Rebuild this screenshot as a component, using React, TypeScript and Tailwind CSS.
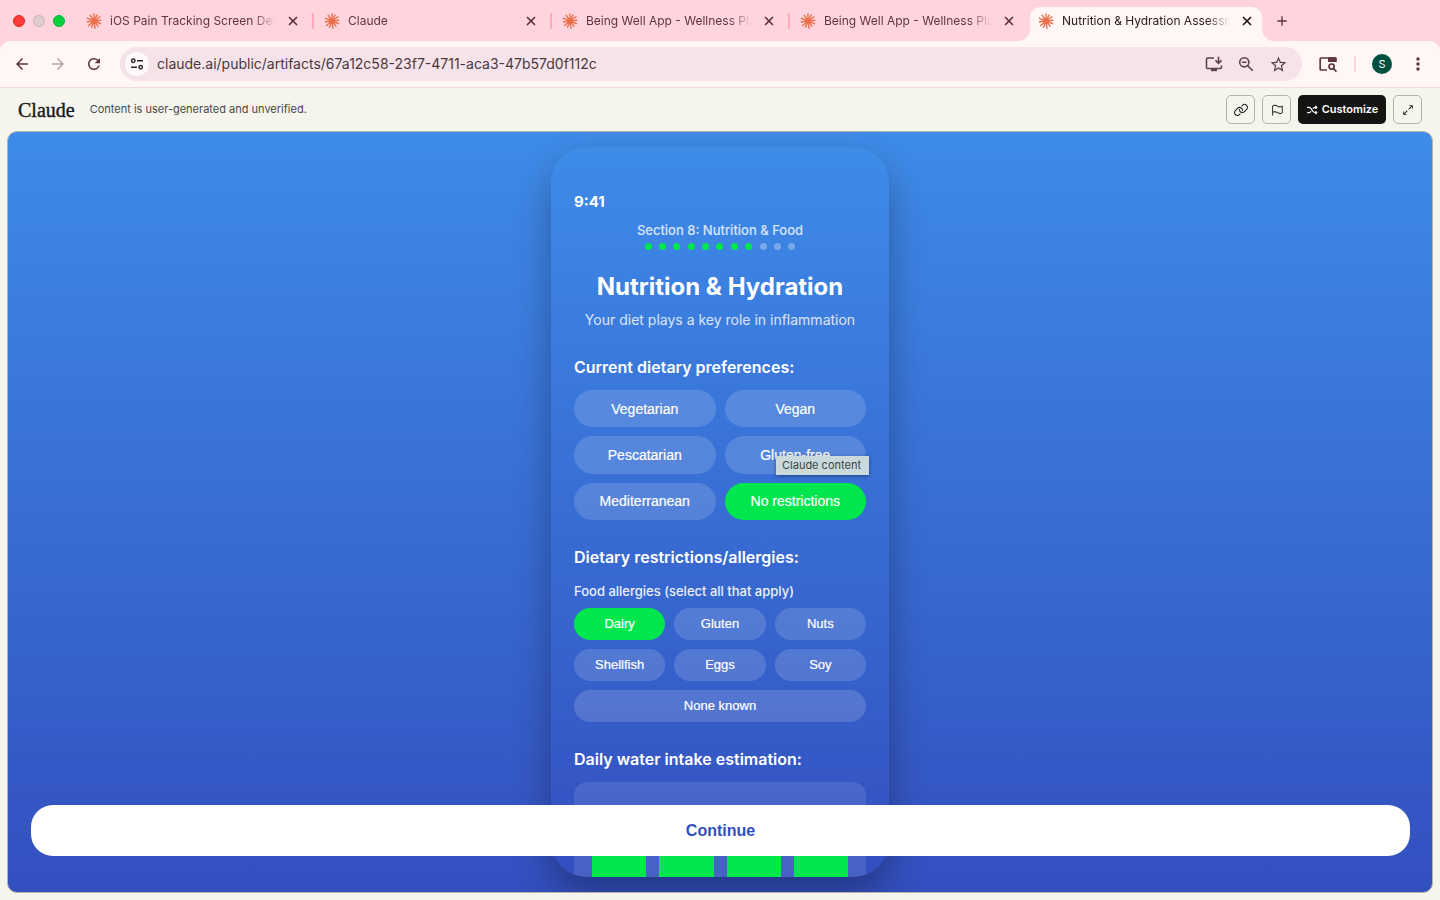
import { ReactNode } from "react";
import { X } from "lucide-react";
import { PiArrowsOutSimple, PiFlag, PiLink, PiShuffleBold } from "react-icons/pi";
import {
  MdAdd,
  MdArrowBack,
  MdArrowForward,
  MdMoreVert,
  MdRefresh,
  MdStarBorder,
} from "react-icons/md";

const tabs = [
  { id: 1, title: "iOS Pain Tracking Screen Design" },
  { id: 2, title: "Claude" },
  { id: 3, title: "Being Well App - Wellness Platform" },
  { id: 4, title: "Being Well App - Wellness Platform" },
  { id: 5, title: "Nutrition & Hydration Assessment" },
];
const activeTab = 5;

const preferences = ["Vegetarian", "Vegan", "Pescatarian", "Gluten-free", "Mediterranean", "No restrictions"];
const allergies = ["Dairy", "Gluten", "Nuts", "Shellfish", "Eggs", "Soy", "None known"];

const rays = [
  [0, 7.6], [27, 7.2], [55, 7.8], [84, 7.2], [112, 7.6], [142, 7.2],
  [172, 7.8], [202, 7.2], [230, 7.8], [262, 7.2], [292, 7.8], [326, 7.4],
];

function Burst() {
  return (
    <svg viewBox="-8 -8 16 16" className="size-4 shrink-0" aria-hidden="true">
      <g stroke="#ea6f4a" strokeWidth="1.4" strokeLinecap="butt">
        {rays.map(([angle, length]) => (
          <line key={angle} x1="0" y1="0" x2="0" y2={-length} transform={`rotate(${angle})`} />
        ))}
      </g>
      <circle r="3" fill="#ea6f4a" />
    </svg>
  );
}

function TabCurve({ flip }: { flip?: boolean }) {
  return (
    <svg
      viewBox="0 0 12 12"
      className={flip ? "absolute bottom-0 left-full size-3 -scale-x-100" : "absolute bottom-0 right-full size-3"}
      aria-hidden="true"
    >
      <path d="M12 0A12 12 0 0 1 0 12H12Z" fill="#fff6f5" />
    </svg>
  );
}

function Tab({ title, active, divider }: { title: string; active: boolean; divider: boolean }) {
  return (
    <div className="relative flex min-w-0 max-w-[238px] flex-1 items-end">
      <div
        className={
          active
            ? "relative ml-0.5 mr-1 flex h-[34px] min-w-0 flex-1 items-center rounded-t-[10px] bg-[#fff6f5] px-2 pb-1.5 text-[#2a1a1e]"
            : "flex h-[34px] min-w-0 flex-1 items-center pb-1.5 pl-2.5 pr-3 text-[#5f3540]"
        }
      >
        {active && <TabCurve />}
        {active && <TabCurve flip />}
        <Burst />
        <span className="ml-2 min-w-0 flex-1 overflow-hidden whitespace-nowrap text-xs leading-4 [mask-image:linear-gradient(to_right,black_86%,transparent)]">
          {title}
        </span>
        <button type="button" aria-label="Close tab" className="ml-2.5 shrink-0">
          <X className="size-3.5" strokeWidth={3} />
        </button>
      </div>
      {divider && <span className="mb-3 h-4 w-0.5 shrink-0 bg-[#ffabbd]" />}
    </div>
  );
}

function ToolbarButton({ label, children }: { label: string; children: ReactNode }) {
  return (
    <button type="button" aria-label={label} className="flex size-5 shrink-0 items-center justify-center">
      {children}
    </button>
  );
}

function Browser() {
  return (
    <header>
      <div className="flex h-[41px] bg-[#ffd4dc]">
        <div className="flex w-[76px] shrink-0 items-center gap-2 pl-[13px]">
          <span className="size-3 rounded-full border border-[#e5211f] bg-[#ff3b3b]" />
          <span className="size-3 rounded-full border border-[#c9b4ba] bg-[#e0ccd1]" />
          <span className="size-3 rounded-full border border-[#00b836] bg-[#00d13c]" />
        </div>
        <nav className="flex min-w-0 flex-1 items-stretch" aria-label="Tabs">
          {tabs.map((tab) => (
            <Tab key={tab.id} title={tab.title} active={tab.id === activeTab} divider={tab.id < activeTab - 1} />
          ))}
          <button type="button" aria-label="New tab" className="ml-2 shrink-0 self-center text-[#5f3540]">
            <MdAdd className="size-4" />
          </button>
        </nav>
      </div>
      <div className="bg-[#ffd4dc]">
        <div className="flex h-[47px] items-center rounded-t-[10px] border-b border-[#f3dbe1] bg-[#fff6f5] pl-3 pr-3 text-[#5f3540]">
          <div className="flex shrink-0 gap-4">
            <ToolbarButton label="Back"><MdArrowBack className="size-[18px]" /></ToolbarButton>
            <ToolbarButton label="Forward"><MdArrowForward className="size-[18px] text-[#b8a3a8]" /></ToolbarButton>
            <ToolbarButton label="Reload"><MdRefresh className="size-[18px]" /></ToolbarButton>
          </div>
          <div className="ml-4 flex h-[34px] min-w-0 flex-1 items-center rounded-full bg-[#f5e3e9] pl-[5px] pr-3.5">
            <button
              type="button"
              aria-label="Site information"
              className="flex size-6 shrink-0 items-center justify-center rounded-full bg-[#fff9f9] text-[#35252a]"
            >
              <svg viewBox="0 0 14 14" className="size-3.5" fill="none" stroke="currentColor" strokeWidth="1.5" aria-hidden="true">
                <circle cx="3.3" cy="3.8" r="1.7" />
                <path d="M7 3.8h6M1 10.2h6" />
                <circle cx="10.7" cy="10.2" r="1.7" />
              </svg>
            </button>
            <input
              aria-label="Address"
              readOnly
              value="claude.ai/public/artifacts/67a12c58-23f7-4711-aca3-47b57d0f112c"
              className="ml-2 min-w-0 flex-1 bg-transparent text-sm text-[#4b383e] outline-none"
            />
            <div className="flex gap-3 text-[#5b444b]">
              <ToolbarButton label="Install">
                <svg viewBox="0 0 18 18" className="size-[18px]" fill="none" stroke="currentColor" strokeWidth="1.6" aria-hidden="true">
                  <path d="M9 3H2.5a1 1 0 0 0-1 1v8.5a1 1 0 0 0 1 1h13a1 1 0 0 0 1-1V10.5" />
                  <path d="M13.5 1.8v6M10.5 5.4l3 3 3-3" />
                  <path d="M6 14h6v2.2H6Z" fill="currentColor" stroke="none" />
                </svg>
              </ToolbarButton>
              <ToolbarButton label="Zoom">
                <svg viewBox="0 0 18 18" className="size-[18px]" fill="none" stroke="currentColor" strokeWidth="1.6" aria-hidden="true">
                  <circle cx="7.3" cy="7.3" r="4.6" />
                  <path d="M5 7.3h4.6M10.6 10.6l5.1 5.1" />
                </svg>
              </ToolbarButton>
              <ToolbarButton label="Bookmark"><MdStarBorder className="size-[19px]" /></ToolbarButton>
            </div>
          </div>
          <div className="ml-4 flex shrink-0 items-center">
            <ToolbarButton label="Search side panel">
              <svg viewBox="0 0 20 18" className="h-[18px] w-5" fill="none" stroke="currentColor" strokeWidth="1.7" aria-hidden="true">
                <path d="M9 15H3.2a1 1 0 0 1-1-1V4a1 1 0 0 1 1-1H18" />
                <path d="M10 2.2h7.8a1 1 0 0 1 1 1V7H10Z" fill="currentColor" stroke="none" />
                <circle cx="13.6" cy="11.6" r="2.6" />
                <path d="m15.5 13.6 3 3" />
              </svg>
            </ToolbarButton>
            <span className="ml-4 h-4 w-0.5 bg-[#ffd4dc]" />
            <button
              type="button"
              aria-label="Profile"
              className="ml-4 flex size-5 items-center justify-center rounded-full bg-[#00503f] text-[11px] text-white"
            >
              S
            </button>
            <span className="ml-4">
              <ToolbarButton label="Menu"><MdMoreVert className="size-5" /></ToolbarButton>
            </span>
          </div>
        </div>
      </div>
    </header>
  );
}

function ArtifactBar() {
  return (
    <div className="flex h-[43px] items-center px-[18px] text-[#1a1a18]">
      <a href="#claude" className="font-['Liberation_Serif',serif] text-xl leading-6 [-webkit-text-stroke:0.4px_#1a1a18]">
        Claude
      </a>
      <p className="ml-[15px] flex-1 text-[11px] text-[#4a4a46]">Content is user-generated and unverified.</p>
      <div className="flex gap-[7px]">
        <button type="button" aria-label="Copy link" className="flex size-[29px] items-center justify-center rounded-[5px] border border-[#b4b3ad]">
          <PiLink className="size-4" />
        </button>
        <button type="button" aria-label="Report" className="flex size-[29px] items-center justify-center rounded-[5px] border border-[#b4b3ad]">
          <PiFlag className="size-3.5" />
        </button>
        <button type="button" className="flex h-[29px] w-[88px] items-center justify-center gap-1 rounded-[5px] bg-[#141412] text-[11px] font-semibold text-white">
          <PiShuffleBold className="size-3" />
          Customize
        </button>
        <button type="button" aria-label="Full screen" className="flex size-[29px] items-center justify-center rounded-[5px] border border-[#b4b3ad]">
          <PiArrowsOutSimple className="size-3.5" />
        </button>
      </div>
    </div>
  );
}

function Phone() {
  return (
    <div className="flex w-[338px] flex-col overflow-hidden rounded-[36px] bg-linear-to-b from-[#3e8be8] to-[#334fbf] px-[23px] pt-[43px] text-white shadow-[0_18px_36px_rgba(0,0,0,0.3)]">
      <div className="shrink-0 text-[15px] font-bold leading-6">9:41</div>
      <p className="mt-2 shrink-0 text-center text-[13px] font-medium leading-4 text-white/80">Section 8: Nutrition &amp; Food</p>
      <div className="mx-auto mt-[5px] flex w-[151px] shrink-0 justify-between">
        {Array.from({ length: 11 }, (_, i) => (
          <span key={i} className={i < 8 ? "size-[7px] rounded-full bg-[#00e64d]" : "size-[7px] rounded-full bg-white/30"} />
        ))}
      </div>
      <h1 className="mt-[21px] shrink-0 whitespace-nowrap text-center text-2xl font-bold leading-8">Nutrition &amp; Hydration</h1>
      <p className="mt-[7px] shrink-0 whitespace-nowrap text-center text-sm leading-5 text-white/80">Your diet plays a key role in inflammation</p>

      <h2 className="mt-[25px] shrink-0 whitespace-nowrap text-base font-semibold leading-6">Current dietary preferences:</h2>
      <div className="mt-[11px] grid h-[130px] shrink-0 grid-cols-2 grid-rows-3 gap-[9px] font-['Liberation_Sans',sans-serif] text-sm [-webkit-text-stroke:0.2px_white]">
        {preferences.map((name) => (
          <button
            key={name}
            type="button"
            className={name === "No restrictions" ? "rounded-full bg-[#00e64d]" : "rounded-full bg-white/15"}
          >
            {name}
          </button>
        ))}
      </div>

      <h2 className="mt-[25px] shrink-0 whitespace-nowrap text-base font-semibold leading-6">Dietary restrictions/allergies:</h2>
      <p className="mt-3.5 shrink-0 whitespace-nowrap text-[13px] font-medium leading-4 text-white/90">Food allergies (select all that apply)</p>
      <div className="mt-[9px] grid shrink-0 grid-cols-3 gap-[9px] font-['Liberation_Sans',sans-serif] text-[13px] [-webkit-text-stroke:0.2px_white]">
        {allergies.map((name) => (
          <button
            key={name}
            type="button"
            className={
              name === "Dairy"
                ? "h-8 rounded-full bg-[#00e64d]"
                : name === "None known"
                  ? "col-span-3 h-8 rounded-full bg-white/15"
                  : "h-8 rounded-full bg-white/15"
            }
          >
            {name}
          </button>
        ))}
      </div>

      <h2 className="mt-[25px] shrink-0 whitespace-nowrap text-base font-semibold leading-6">Daily water intake estimation:</h2>
      <div className="mt-[11px] grid min-h-40 shrink-0 grid-cols-4 gap-[13px] rounded-t-[14px] bg-white/10 px-[18px] pt-10">
        {[1, 2, 3, 4].map((glass) => (
          <span key={glass} className="rounded-t-md bg-[#00e64d]" />
        ))}
      </div>
    </div>
  );
}

export default function App() {
  return (
    <div className="flex h-screen flex-col bg-[#f5f4ed] font-[Inter,sans-serif]">
      <Browser />
      <ArtifactBar />
      <main className="relative mx-[7px] mb-[7px] flex min-h-0 flex-1 justify-center overflow-hidden rounded-[10px] border border-[#b4b3ad] bg-linear-to-b from-[#3e8be8] to-[#334fbf] py-[15px]">
        <Phone />
        <button
          type="button"
          className="absolute bottom-9 left-[23px] right-[22px] h-[51px] rounded-[22px] bg-white font-['Liberation_Sans',sans-serif] text-base font-bold text-[#334fbf]"
        >
          Continue
        </button>
        <div
          role="tooltip"
          className="absolute left-1/2 top-[324px] ml-14 whitespace-nowrap bg-[#cad9dc] pl-1.5 pr-2 text-[11px] leading-[19px] text-[#3c4648] shadow-[0_1px_4px_rgba(0,0,0,0.4)]"
        >
          Claude content
        </div>
      </main>
    </div>
  );
}
